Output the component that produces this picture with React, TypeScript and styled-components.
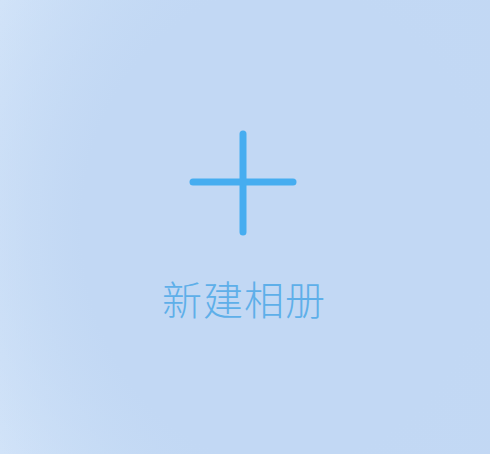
import React from "react";
import styled, { createGlobalStyle } from "styled-components";

const Global = createGlobalStyle`
  html, body { margin: 0; padding: 0; }
  body { font-family: "Noto Sans CJK SC", "Noto Sans", sans-serif; }
`;

const Page = styled.div`
  width: 490px;
  height: 454px;
  box-sizing: border-box;
  padding-top: 130px;
  display: flex;
  flex-direction: column;
  align-items: center;
  background:
    radial-gradient(ellipse 75% 95% at 58% 50%, #c2d8f4 55%, rgba(194,216,244,0) 100%),
    linear-gradient(90deg, #d4e5f9 0%, #c6dcf5 40%, #c3d8f4 100%);
`;

const PlusIcon = styled.svg`
  width: 108px;
  height: 106px;
  display: block;
  margin-left: -4px;
`;

const Label = styled.div`
  margin-top: 42px;
  font-size: 40px;
  line-height: 40px;
  font-weight: 300;
  color: #5eafe9;
  letter-spacing: 1px;
  margin-left: -2px;
`;

export default function App() {
  return (
    <>
      <Global />
      <Page>
        <PlusIcon viewBox="0 0 108 106">
          <g stroke="#46adf0" strokeWidth="7" strokeLinecap="round">
            <line x1="54" y1="4" x2="54" y2="102" />
            <line x1="4" y1="52" x2="104" y2="52" />
          </g>
        </PlusIcon>
        <Label>新建相册</Label>
      </Page>
    </>
  );
}
